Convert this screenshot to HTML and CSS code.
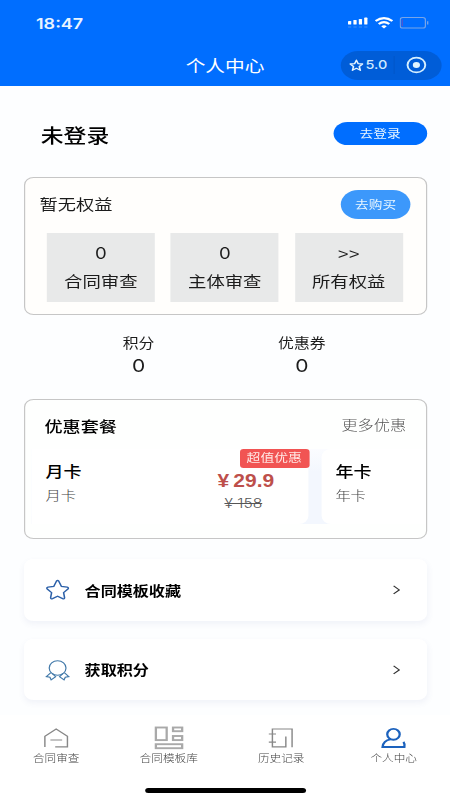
FILE: index.html
```html
<!DOCTYPE html>
<html lang="zh-CN">
<head>
<meta charset="utf-8">
<title>个人中心</title>
<link rel="stylesheet" href="styles.css">
</head>
<body>
<div class="screen">
  <header class="header">
    <div class="status">
      <span class="time">18:47</span>
      <div class="status-icons">
        <svg class="signal" width="17" height="12" viewBox="0 0 17 12"><g fill="#fff"><rect x="0" y="4" width="2.7" height="3.5" rx=".6"/><rect x="4.5" y="3" width="2.7" height="4.5" rx=".6"/><rect x="9" y="2" width="2.7" height="5.5" rx=".6"/><rect x="13.5" y="0.6" width="2.7" height="6.9" rx=".6"/></g><path d="M0 10H16.5" stroke="#3f8ff8" stroke-width="1.2" stroke-dasharray="2.7 1.8"/></svg>
        <svg class="wifi" width="16" height="12" viewBox="0 0 16 12"><g fill="none" stroke="#fff" stroke-width="2"><path d="M1 4.1Q8-1.8 15 4.1"/><path d="M3.6 7Q8 3.2 12.4 7"/></g><path d="M5.7 9.2Q8 7.4 10.3 9.2L8 11.6Z" fill="#fff"/></svg>
        <svg class="battery" width="25" height="12" viewBox="0 0 25 12"><rect x=".5" y=".5" width="21" height="10.6" rx="2.2" fill="none" stroke="#78a5e8"/><path d="M2.2 2.5V9" stroke="#5a52c8"/><path d="M23.4 4.2V7.4" stroke="#78a5e8" stroke-width="1.1"/></svg>
      </div>
    </div>
    <div class="nav">
      <h1>个人中心</h1>
      <div class="capsule">
        <svg width="12" height="13" viewBox="0 0 12 13"><path d="M6 1.2L7.5 4.7 11.2 5 8.4 7.5 9.3 11.3 6 9.3 2.7 11.3 3.6 7.5.8 5 4.5 4.7Z" fill="none" stroke="#e5f4ff" stroke-width="1.3" stroke-linejoin="round"/></svg>
        <span>5.0</span>
        <i class="divider"></i>
        <svg width="18" height="18" viewBox="0 0 18 18"><circle cx="9" cy="9" r="7.4" fill="none" stroke="#d6f0ff" stroke-width="1.6"/><circle cx="9" cy="9" r="3" fill="#e2f5ff"/></svg>
      </div>
    </div>
  </header>

  <main class="content">
    <section class="login">
      <h2>未登录</h2>
      <button class="btn btn-login">去登录</button>
    </section>

    <section class="card rights">
      <div class="rights-head"><span>暂无权益</span><button class="btn btn-buy">去购买</button></div>
      <div class="tiles">
        <div class="tile"><b>0</b><span>合同审查</span></div>
        <div class="tile"><b>0</b><span>主体审查</span></div>
        <div class="tile"><b class="more-arrows">&gt;&gt;</b><span>所有权益</span></div>
      </div>
    </section>

    <section class="stats">
      <div class="stat"><span>积分</span><b>0</b></div>
      <div class="stat"><span>优惠券</span><b>0</b></div>
    </section>

    <section class="card offers">
      <div class="offers-head"><h3>优惠套餐</h3><a>更多优惠</a></div>
      <div class="plans">
        <div class="plan">
          <div class="plan-name"><h4>月卡</h4><p>月卡</p></div>
          <div class="plan-price"><strong>¥ 29.9</strong><del>¥ 158</del></div>
          <em class="tag">超值优惠</em>
        </div>
        <div class="plan plan-next">
          <div class="plan-name"><h4>年卡</h4><p>年卡</p></div>
        </div>
      </div>
    </section>

    <section class="row row-favorites">
      <svg width="22" height="24" viewBox="0 0 22 24"><path d="M10 3.2Q11 1.8 12 3.2L14.2 8.4 19 9.1Q20.6 9.6 19.6 11L16 14.6 16.8 19.6Q16.7 21.4 15.2 20.6L11 18.2 6.8 20.6Q5.3 21.4 5.2 19.6L6 14.6 2.4 11Q1.4 9.6 3 9.1L7.8 8.4Z" fill="none" stroke="#2d61a9" stroke-width="1.3"/></svg>
      <span>合同模板收藏</span>
      <svg class="chevron" width="7" height="10" viewBox="0 0 7 10"><path d="M1 .9L5.7 4.9 1 8.9" fill="none" stroke="#333" stroke-width="1.1"/></svg>
    </section>
    <section class="row row-points">
      <svg width="22" height="24" viewBox="0 0 22 24"><g fill="none" stroke="#4279a9" stroke-width="1"><ellipse cx="11" cy="10" rx="7" ry="7.2"/><path d="M5.4 14.6L1.6 18.6 4.6 19.2 5.6 21.8 9.4 18.6 6.6 15.6M16.6 14.6L20.4 18.6 17.4 19.2 16.4 21.8 12.6 18.6 15.4 15.6"/></g></svg>
      <span>获取积分</span>
      <svg class="chevron" width="7" height="10" viewBox="0 0 7 10"><path d="M1 .9L5.7 4.9 1 8.9" fill="none" stroke="#333" stroke-width="1.1"/></svg>
    </section>
  </main>

  <footer class="footer">
    <nav class="tabs">
      <div class="tab"><svg width="24" height="26" viewBox="0 0 24 26"><path d="M2.4 23V12.2L11.8 5 21.2 12.2V22.8H11M7 16H16.8" fill="none" stroke="#888" stroke-width="1.2"/></svg><span>合同审查</span></div>
      <div class="tab"><svg width="26" height="26" viewBox="0 0 26 26"><g fill="none" stroke="#a9a9a9" stroke-width="1.9"><rect x="1.9" y="3.5" width="9" height="12.6"/><rect x="16.2" y="3.5" width="7.6" height="3.7"/><rect x="16.2" y="12" width="7.6" height="4.1"/><rect x="1.9" y="20.2" width="21.9" height="4"/></g></svg><span>合同模板库</span></div>
      <div class="tab"><svg width="24" height="26" viewBox="0 0 24 26"><path d="M21.4 23.3V5H5V22.8H16.2V12.5M2 10H8M2 18.2H8" fill="none" stroke="#888" stroke-width="1.2"/></svg><span>历史记录</span></div>
      <div class="tab"><svg width="24" height="26" viewBox="0 0 24 26"><g fill="none" stroke="#1c62bd" stroke-width="1.9"><ellipse cx="11.9" cy="10.3" rx="5.2" ry="5.4"/><path d="M9.4 15.4Q3.4 16.4 2.8 23H21Q21.4 19.7 20.2 17.9"/></g></svg><span>个人中心</span></div>
    </nav>
    <div class="home-bar"></div>
  </footer>
</div>
</body>
</html>
```
FILE: styles.css
```css
* { box-sizing: border-box; }
body {
  margin: 0;
  overflow: hidden;
  background: #fdfeff;
  color: #1c1c1c;
  font-family: "Noto Sans CJK SC", "Liberation Sans", sans-serif;
}
h1, h2, h3, h4, p { margin: 0; }
i, em { font-style: normal; }
svg { display: block; flex: none; }

/* 375pt-wide layout, widened to fill the window */
.screen {
  width: 375px;
  height: 800px;
  display: flex;
  flex-direction: column;
  transform: scaleX(1.2);
  transform-origin: 0 0;
}

.header { height: 86px; flex: none; background: #006eff; color: #fff; }
.status {
  height: 46px;
  padding: 1px 17px 0 30px;
  display: flex;
  align-items: center;
  justify-content: space-between;
}
.time { font: 600 15px/20px Inter, sans-serif; color: #e9f4ff; }
.status-icons { margin-top: -1px; display: flex; align-items: center; gap: 5px; }
.nav {
  height: 38px;
  display: grid;
  grid-template-columns: 1fr auto 1fr;
  align-items: center;
}
.nav h1 { grid-column: 2; font-size: 16.4px; line-height: 38px; font-weight: 400; }
.capsule {
  justify-self: end;
  width: 83.5px;
  height: 29px;
  margin-right: 7.5px;
  padding: 0 11.5px 0 7px;
  border-radius: 15px;
  background: #005dd8;
  display: flex;
  align-items: center;
  gap: 1.5px;
}
.capsule span { font: 500 12px/20px Inter, sans-serif; color: #cfe9ff; }
.capsule svg:last-child { margin-left: auto; }
.divider { width: 1px; height: 18px; margin-left: 4px; background: #0058cb; }

.content { flex: 1; padding: 0 19.5px; display: flex; flex-direction: column; }
.btn { border: 0; padding: 0; color: #e8f6ff; font-family: inherit; font-weight: 400; }
.login {
  height: 91px;
  padding: 4px 0 0 14.5px;
  display: flex;
  align-items: center;
  justify-content: space-between;
}
.login h2 { padding-top: 3px; font-size: 19px; line-height: 28px; font-weight: 500; color: #000; }
.btn-login {
  width: 77.5px;
  height: 23px;
  border-radius: 12px;
  background: #006eff;
  font-size: 11.4px;
  line-height: 23px;
}

.card { border: 1px solid #c6c6c6; border-radius: 8px; }
.rights { height: 138px; padding: 12px 18.5px 0; background: #fffefc; }
.rights-head {
  height: 29px;
  margin: 0 -6px 0 -6px;
  display: flex;
  align-items: center;
  justify-content: space-between;
  font-size: 15.2px;
}
.rights-head span { padding-bottom: 3px; }
.btn-buy {
  width: 58px;
  height: 29px;
  border-radius: 15px;
  background: #3c98fb;
  font-size: 11.4px;
  line-height: 27px;
}
.tiles { margin-top: 14px; display: grid; grid-template-columns: repeat(3, 90px); gap: 13.3px; }
.tile {
  height: 69px;
  padding-top: 8px;
  background: #e8e9e9;
  display: flex;
  flex-direction: column;
  align-items: center;
  font-size: 15.3px;
  line-height: 28px;
}
.tile b { height: 26px; font: 400 15.5px/25px Inter, sans-serif; }
.tile span { margin-top: -1px; }
.tile .more-arrows { font: 400 15.5px/26px "Liberation Sans", sans-serif; }

.stats { height: 84px; padding: 17px 28px 0; display: grid; grid-template-columns: 136px 136px; }
.stat {
  display: flex;
  flex-direction: column;
  align-items: center;
  font-size: 13.2px;
  line-height: 22px;
}
.stat b { font: 400 17.5px/24px Inter, sans-serif; }

.offers { height: 140px; padding: 11px 0 0 5px; overflow: hidden; background: #fefffe; }
.offers-head {
  height: 28px;
  padding: 0 16px 0 11.5px;
  display: flex;
  align-items: center;
  justify-content: space-between;
}
.offers-head h3 { font-size: 15.1px; font-weight: 500; color: #000; }
.offers-head a { margin-top: -2px; font-size: 13.5px; font-weight: 300; color: #555; }
.plans { margin-top: 10px; display: flex; background: linear-gradient(#fbfcff, #f3f7fe 30%); height: 75px; }
.plan {
  position: relative;
  width: 231px;
  flex: none;
  padding: 10px 28px 0 12.5px;
  display: flex;
  justify-content: space-between;
  border-radius: 0 8px 8px 0;
  background: #fff;
}
.plan-next { width: 90px; margin-left: 11px; padding-left: 12px; border-radius: 8px 0 0 8px; }
.plan h4 { font-size: 15px; line-height: 24px; font-weight: 500; color: #000; }
.plan p { font-size: 12.7px; line-height: 24px; font-weight: 300; color: #444; }
.plan-price { padding-top: 11px; display: flex; flex-direction: column; align-items: flex-end; }
.plan-price strong { font: 700 17.5px/22px "Liberation Sans", sans-serif; word-spacing: -1.5px; color: #bd4f4b; }
.plan-price del { font: 300 13px/22px Inter, sans-serif; color: #555; margin-right: 10px; }
.tag {
  position: absolute;
  top: 0;
  right: -1px;
  width: 58px;
  height: 19px;
  border-radius: 3px;
  background: #f15453;
  color: #ffe9e6;
  font-size: 11.5px;
  line-height: 17px;
  text-align: center;
}

.row {
  padding: 0 22px 0 17px;
  border-radius: 8px;
  background: #fff;
  box-shadow: 0 3px 6px rgba(70, 90, 160, .07);
  display: flex;
  align-items: center;
  font-size: 13.4px;
  font-weight: 600;
  color: #000;
}
.row span { margin: -1px 0 0 12px; }
.chevron { margin-left: auto; }
.row-favorites { height: 62px; margin-top: 20px; }
.row-points { height: 61px; margin-top: 18px; }

.footer { height: 85px; flex: none; background: #fff; }
.tabs { padding-top: 9px; display: grid; grid-template-columns: repeat(4, 93.75px); }
.tab {
  display: flex;
  flex-direction: column;
  align-items: center;
  font-size: 9.7px;
  line-height: 17px;
  font-weight: 300;
  color: #444;
}
.home-bar { width: 134px; height: 5px; margin: 21px auto 0; border-radius: 3px; background: #000; }
```
